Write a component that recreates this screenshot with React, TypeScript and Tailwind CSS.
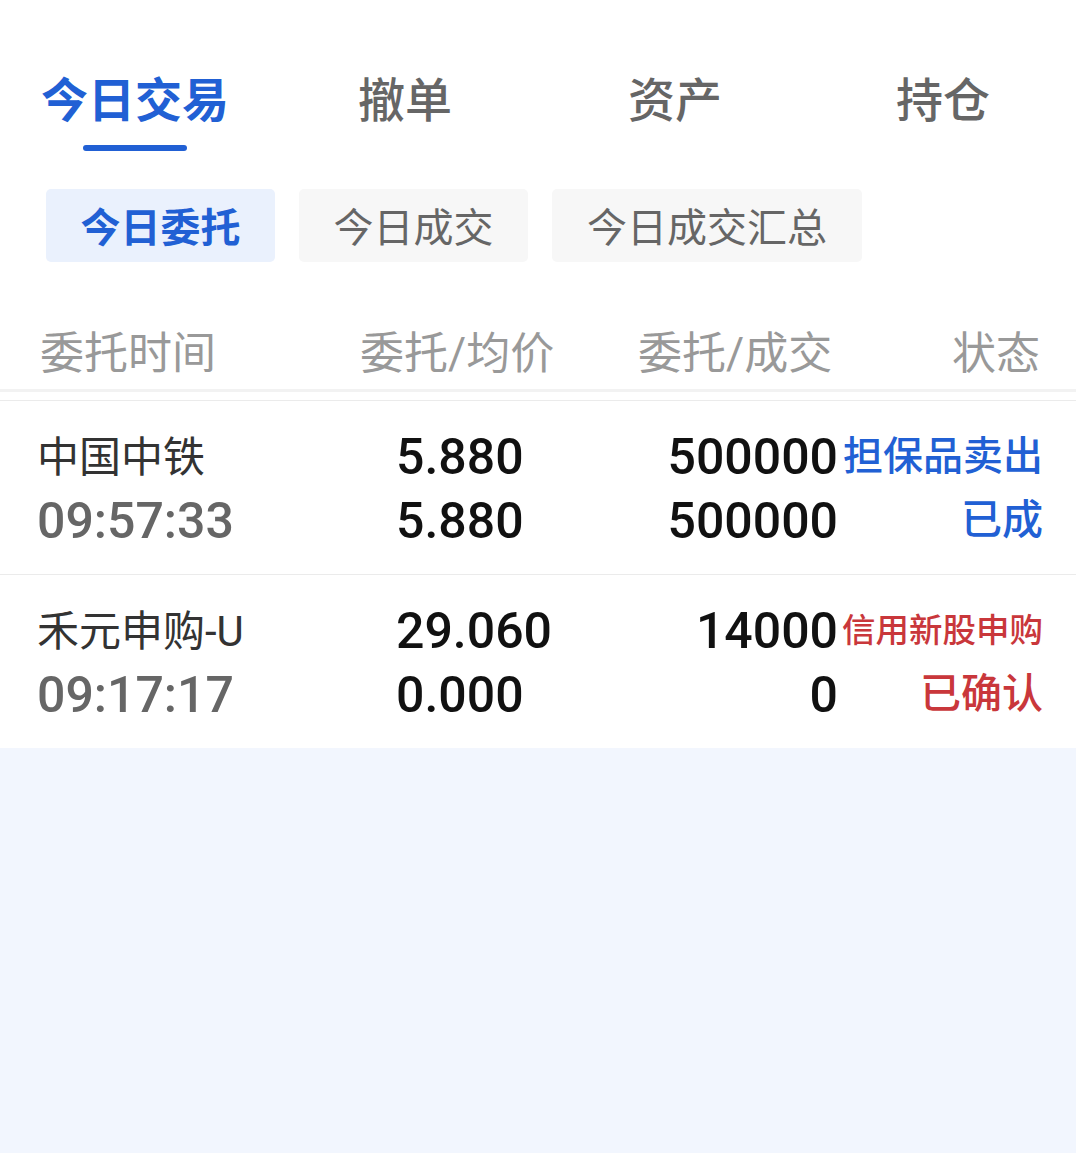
import React from 'react';

const FONT = 'font-["Roboto","Noto_Sans_CJK_SC",sans-serif]';

const topTabs = ['今日交易', '撤单', '资产', '持仓'];
const subTabs = [
  { label: '今日委托', w: 'w-[229px]' },
  { label: '今日成交', w: 'w-[229px]' },
  { label: '今日成交汇总', w: 'w-[310px]' },
];

const orders = [
  {
    name: '中国中铁',
    time: '09:57:33',
    price: '5.880',
    avg: '5.880',
    qty: '500000',
    done: '500000',
    type: '担保品卖出',
    status: '已成',
    red: false,
  },
  {
    name: '禾元申购-U',
    time: '09:17:17',
    price: '29.060',
    avg: '0.000',
    qty: '14000',
    done: '0',
    type: '信用新股申购',
    status: '已确认',
    red: true,
  },
];

export default function App() {
  return (
    <div className={`${FONT} w-[1076px] min-h-[1153px] bg-[#f2f6fe]`}>
      <div className="bg-white">
        {/* main tabs */}
        <div className="flex pt-[74px]">
          {topTabs.map((t, i) => (
            <div key={t} className={`${i === 3 ? 'w-[266px]' : 'w-[270px]'} flex flex-col items-center`}>
              <span
                className={`text-[47px] leading-[54px] ${
                  i === 0 ? 'font-bold text-[#2160d4]' : 'font-medium text-[#666666]'
                }`}
              >
                {t}
              </span>
              <div className={`mt-[17px] h-[6px] w-[104px] rounded-full ${i === 0 ? 'bg-[#2160d4]' : 'bg-transparent'}`} />
            </div>
          ))}
        </div>

        {/* sub tabs */}
        <div className="flex gap-[24px] pl-[46px] mt-[38px]">
          {subTabs.map((s, i) => (
            <div
              key={s.label}
              className={`${s.w} h-[73px] pt-[6px] rounded-[5px] flex items-center justify-center text-[40px] leading-none ${
                i === 0 ? 'bg-[#eaf1fd] text-[#2160d4] font-bold' : 'bg-[#f7f7f7] text-[#666666]'
              }`}
            >
              {s.label}
            </div>
          ))}
        </div>

        {/* column headers */}
        <div className="mt-[53px] h-[74px] pt-[4px] flex items-center pl-[40px] pr-[36px] text-[44px] text-[#999999] leading-none">
          <div className="w-[320px]">委托时间</div>
          <div className="w-[278px]">委托/均价</div>
          <div className="flex-1">委托/成交</div>
          <div>状态</div>
        </div>
        <div className="h-[3px] bg-[#f2f2f2]" />
        <div className="h-[8px]" />

        {/* rows */}
        {orders.map((o) => (
          <div key={o.name} className="flex border-t border-[#ebebeb] pl-[37px] pr-[33px] pt-[24px] pb-[21px]">
            <div className="w-[359px] flex flex-col">
              <span className="h-[64px] flex items-center text-[42px] text-[#333333]">{o.name}</span>
              <span className="h-[64px] flex items-center text-[50px] font-medium text-[#666666]">{o.time}</span>
            </div>
            <div className="w-[200px] flex flex-col text-[50px] font-medium text-[#111111]">
              <span className="h-[64px] flex items-center">{o.price}</span>
              <span className="h-[64px] flex items-center">{o.avg}</span>
            </div>
            <div className="w-[242px] flex flex-col items-end text-[50px] font-medium text-[#111111]">
              <span className="h-[64px] flex items-center">{o.qty}</span>
              <span className="h-[64px] flex items-center">{o.done}</span>
            </div>
            <div className={`flex-1 flex flex-col items-end font-medium ${o.red ? 'text-[#c9373b]' : 'text-[#2160d4]'}`}>
              <span className={`h-[64px] flex items-center whitespace-nowrap ${o.red ? 'text-[33.5px]' : 'text-[40px]'}`}>
                {o.type}
              </span>
              <span className="h-[64px] flex items-center text-[41px]">{o.status}</span>
            </div>
          </div>
        ))}
      </div>
    </div>
  );
}
